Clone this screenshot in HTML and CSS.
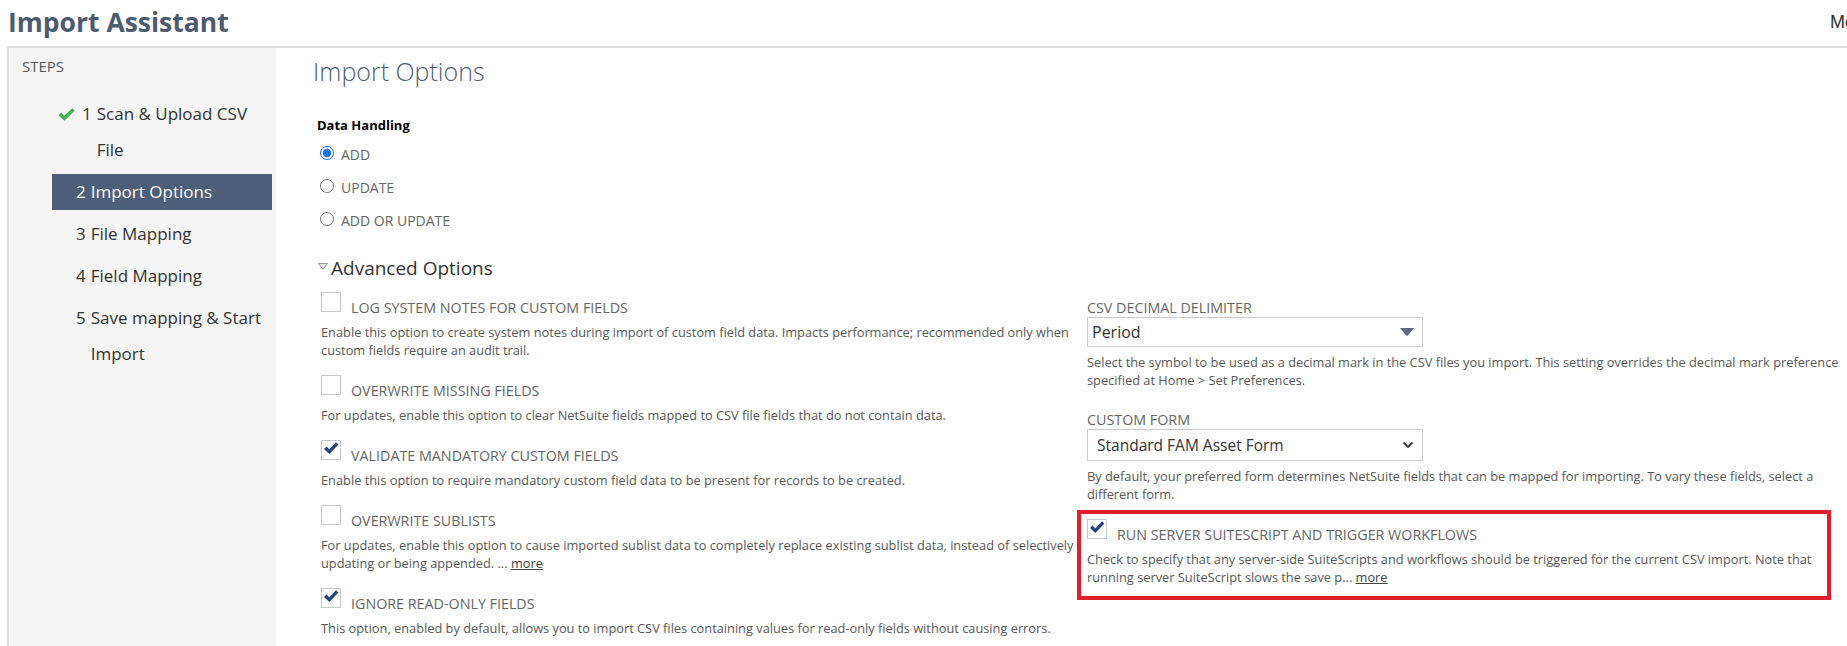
FILE: index.html
```html
<!DOCTYPE html>
<html lang="en">
<head>
  <meta charset="UTF-8">
  <meta name="viewport" content="width=device-width, initial-scale=1.0">
  <title>Import Assistant</title>
  <link rel="stylesheet" href="styles.css">
</head>
<body>
  <header class="page-header">
    <h1 class="page-title">Import Assistant</h1>
    <span class="header-link">More</span>
  </header>

  <div class="assistant">
    <nav class="steps">
      <div class="steps-title">STEPS</div>
      <ol class="step-list">
        <li class="step done">
          <span class="step-icon">
            <svg width="17" height="13" viewBox="0 0 16 12"><polygon points="0.5,6.5 3,4.2 6,7.2 13.5,0 15.8,2.2 6,11.8" fill="#3db34a"/></svg>
          </span>
          <span class="step-num">1</span>
          <span class="step-label">Scan &amp; Upload CSV File</span>
        </li>
        <li class="step active">
          <span class="step-icon"></span>
          <span class="step-num">2</span>
          <span class="step-label">Import Options</span>
        </li>
        <li class="step">
          <span class="step-icon"></span>
          <span class="step-num">3</span>
          <span class="step-label">File Mapping</span>
        </li>
        <li class="step">
          <span class="step-icon"></span>
          <span class="step-num">4</span>
          <span class="step-label">Field Mapping</span>
        </li>
        <li class="step">
          <span class="step-icon"></span>
          <span class="step-num">5</span>
          <span class="step-label">Save mapping &amp; Start Import</span>
        </li>
      </ol>
    </nav>

    <main class="content">
      <h2 class="content-title">Import Options</h2>

      <section class="data-handling">
        <div class="field-title">Data Handling</div>
        <label class="radio-row first"><input type="radio" name="handling" checked> ADD</label>
        <label class="radio-row"><input type="radio" name="handling"> UPDATE</label>
        <label class="radio-row"><input type="radio" name="handling"> ADD OR UPDATE</label>
      </section>

      <section class="advanced">
        <div class="advanced-title">
          <svg class="twisty" width="10" height="7" viewBox="0 0 10 7"><polygon points="0.5,0.5 9.5,0.5 5,6.3" fill="#e6e6e6" stroke="#999" stroke-width="1"/></svg>
          Advanced Options
        </div>

        <div class="advanced-grid">
          <div class="col">
            <div class="option">
              <div class="option-row">
                <span class="checkbox"></span>
                <span class="option-label">LOG SYSTEM NOTES FOR CUSTOM FIELDS</span>
              </div>
              <div class="option-desc">Enable this option to create system notes during import of custom field data. Impacts performance; recommended only when custom fields require an audit trail.</div>
            </div>
            <div class="option">
              <div class="option-row">
                <span class="checkbox"></span>
                <span class="option-label">OVERWRITE MISSING FIELDS</span>
              </div>
              <div class="option-desc">For updates, enable this option to clear NetSuite fields mapped to CSV file fields that do not contain data.</div>
            </div>
            <div class="option">
              <div class="option-row">
                <span class="checkbox checked">
                  <svg width="18" height="18" viewBox="0 0 18 18"><polygon points="2,8 4.6,5.6 7.2,8.6 14,1.2 16.4,3.4 7.4,13" fill="#1f4387"/></svg>
                </span>
                <span class="option-label">VALIDATE MANDATORY CUSTOM FIELDS</span>
              </div>
              <div class="option-desc">Enable this option to require mandatory custom field data to be present for records to be created.</div>
            </div>
            <div class="option">
              <div class="option-row">
                <span class="checkbox"></span>
                <span class="option-label">OVERWRITE SUBLISTS</span>
              </div>
              <div class="option-desc">For updates, enable this option to cause imported sublist data to completely replace existing sublist data, instead of selectively updating or being appended. ... <a class="more">more</a></div>
            </div>
            <div class="option">
              <div class="option-row">
                <span class="checkbox checked">
                  <svg width="18" height="18" viewBox="0 0 18 18"><polygon points="2,8 4.6,5.6 7.2,8.6 14,1.2 16.4,3.4 7.4,13" fill="#1f4387"/></svg>
                </span>
                <span class="option-label">IGNORE READ-ONLY FIELDS</span>
              </div>
              <div class="option-desc">This option, enabled by default, allows you to import CSV files containing values for read-only fields without causing errors.</div>
            </div>
          </div>

          <div class="col col-right">
            <div class="field">
              <div class="field-label">CSV DECIMAL DELIMITER</div>
              <div class="select">
                <span>Period</span>
                <svg width="14" height="8" viewBox="0 0 14 8"><path d="M0 0 H14 L7.8 7.4 Q7 8 6.2 7.4 Z" fill="#596a86"/></svg>
              </div>
              <div class="field-desc">Select the symbol to be used as a decimal mark in the CSV files you import. This setting overrides the decimal mark preference specified at Home &gt; Set Preferences.</div>
            </div>
            <div class="field">
              <div class="field-label">CUSTOM FORM</div>
              <div class="select select-lg">
                <span>Standard FAM Asset Form</span>
                <svg width="12" height="8" viewBox="0 0 12 8"><polyline points="1.5,1.5 6,6 10.5,1.5" fill="none" stroke="#333" stroke-width="1.8"/></svg>
              </div>
              <div class="field-desc">By default, your preferred form determines NetSuite fields that can be mapped for importing. To vary these fields, select a different form.</div>
            </div>
            <div class="highlight">
              <div class="option-row">
                <span class="checkbox checked">
                  <svg width="18" height="18" viewBox="0 0 18 18"><polygon points="2,8 4.6,5.6 7.2,8.6 14,1.2 16.4,3.4 7.4,13" fill="#1f4387"/></svg>
                </span>
                <span class="option-label">RUN SERVER SUITESCRIPT AND TRIGGER WORKFLOWS</span>
              </div>
              <div class="option-desc">Check to specify that any server-side SuiteScripts and workflows should be triggered for the current CSV import. Note that running server SuiteScript slows the save p... <a class="more">more</a></div>
            </div>
          </div>
        </div>
      </section>
    </main>
  </div>
</body>
</html>
```

FILE: styles.css
```css
body {
  margin: 0;
  font-family: "Open Sans", "Noto Sans", sans-serif;
  color: #333;
  background: #fff;
  height: 100vh;
  overflow: hidden;
}
.page-header {
  display: flex;
  height: 46px;
  padding-left: 8px;
}
.page-title {
  margin: 0;
  font-size: 26.5px;
  font-weight: 700;
  line-height: 44px;
  color: #4b5b74;
}
.header-link {
  margin-left: auto;
  width: 17px;
  overflow: hidden;
  white-space: nowrap;
  font-family: "Liberation Sans", Arial, sans-serif;
  font-size: 18px;
  line-height: 44px;
  color: #333;
}
.assistant {
  display: flex;
  margin-left: 7px;
  border-top: 2px solid #e0e0e0;
  border-left: 2px solid #e0e0e0;
  min-height: calc(100vh - 48px);
}
.steps {
  width: 267px;
  flex: none;
  background: #f5f5f5;
  padding-top: 8px;
}
.steps-title {
  padding-left: 13px;
  font-size: 15px;
  line-height: 20px;
  color: #555;
}
.step-list {
  list-style: none;
  margin: 20px 4px 0 43px;
  padding: 0;
}
.step {
  display: flex;
  margin-bottom: 6px;
  padding-right: 5px;
  font-size: 17px;
  line-height: 36px;
  color: #333;
}
.step-icon {
  width: 24px;
  height: 36px;
  flex: none;
  display: flex;
  align-items: center;
  padding-left: 6px;
  box-sizing: border-box;
}
.step.done .step-icon {
  width: auto;
  padding-right: 7px;
}
.step-num {
  flex: none;
  margin-right: 5px;
}
.step.active {
  background: #4d5e78;
  color: #fff;
}
.content {
  flex: 1;
  padding: 7px 0 0 35px;
}
.content-title {
  margin: 0 0 0 2px;
  font-size: 25px;
  font-weight: 300;
  line-height: 32px;
  color: #4d5f79;
}
.data-handling {
  margin: 29px 0 0 6px;
}
.field-title {
  font-size: 13px;
  font-weight: 700;
  line-height: 18px;
  color: #000;
}
.radio-row {
  display: flex;
  align-items: center;
  height: 33px;
  font-size: 14px;
  color: #666;
}
.radio-row.first {
  margin-top: 4px;
}
.radio-row input {
  width: 14px;
  height: 14px;
  margin: 0 7px 3px 3px;
  accent-color: #1570e6;
}
.advanced {
  margin: 18px 0 0 6px;
}
.advanced-title {
  display: flex;
  align-items: flex-start;
  font-size: 19px;
  line-height: 26px;
  color: #333;
}
.twisty {
  flex: none;
  margin: 8px 3px 0 1px;
}
.advanced-grid {
  display: grid;
  grid-template-columns: 758px 755px;
  column-gap: 8px;
  margin: 11px 0 0 4px;
}
.option {
  margin-bottom: 16px;
}
.option-row {
  display: flex;
  align-items: flex-start;
}
.checkbox {
  width: 20px;
  height: 20px;
  flex: none;
  box-sizing: border-box;
  border: 1px solid #c9c9c9;
  background: #fff;
  display: flex;
}
.option-label {
  margin: 7px 0 0 10px;
  font-size: 14.3px;
  line-height: 18px;
  color: #666;
}
.option-desc,
.field-desc {
  margin-top: 6px;
  font-size: 12.8px;
  line-height: 18px;
  color: #595959;
}
.more {
  color: #444;
  text-decoration: underline;
}
.col-right {
  padding-top: 7px;
}
.field + .field {
  margin-top: 22px;
}
.field-label {
  font-size: 14.3px;
  line-height: 18px;
  color: #666;
}
.select {
  display: flex;
  align-items: center;
  justify-content: space-between;
  width: 336px;
  height: 30px;
  box-sizing: border-box;
  border: 1px solid #ccc;
  padding: 0 8px 0 4px;
  font-size: 16px;
  color: #333;
}
.select-lg {
  height: 32px;
  padding-left: 9px;
  font-size: 15.5px;
}
.field-desc {
  margin-top: 6px;
}
.highlight {
  width: 754px;
  box-sizing: border-box;
  margin: 7px 0 0 -10px;
  border: 4px solid #e31e2b;
  padding: 5px 6px 10px 6px;
}
```
